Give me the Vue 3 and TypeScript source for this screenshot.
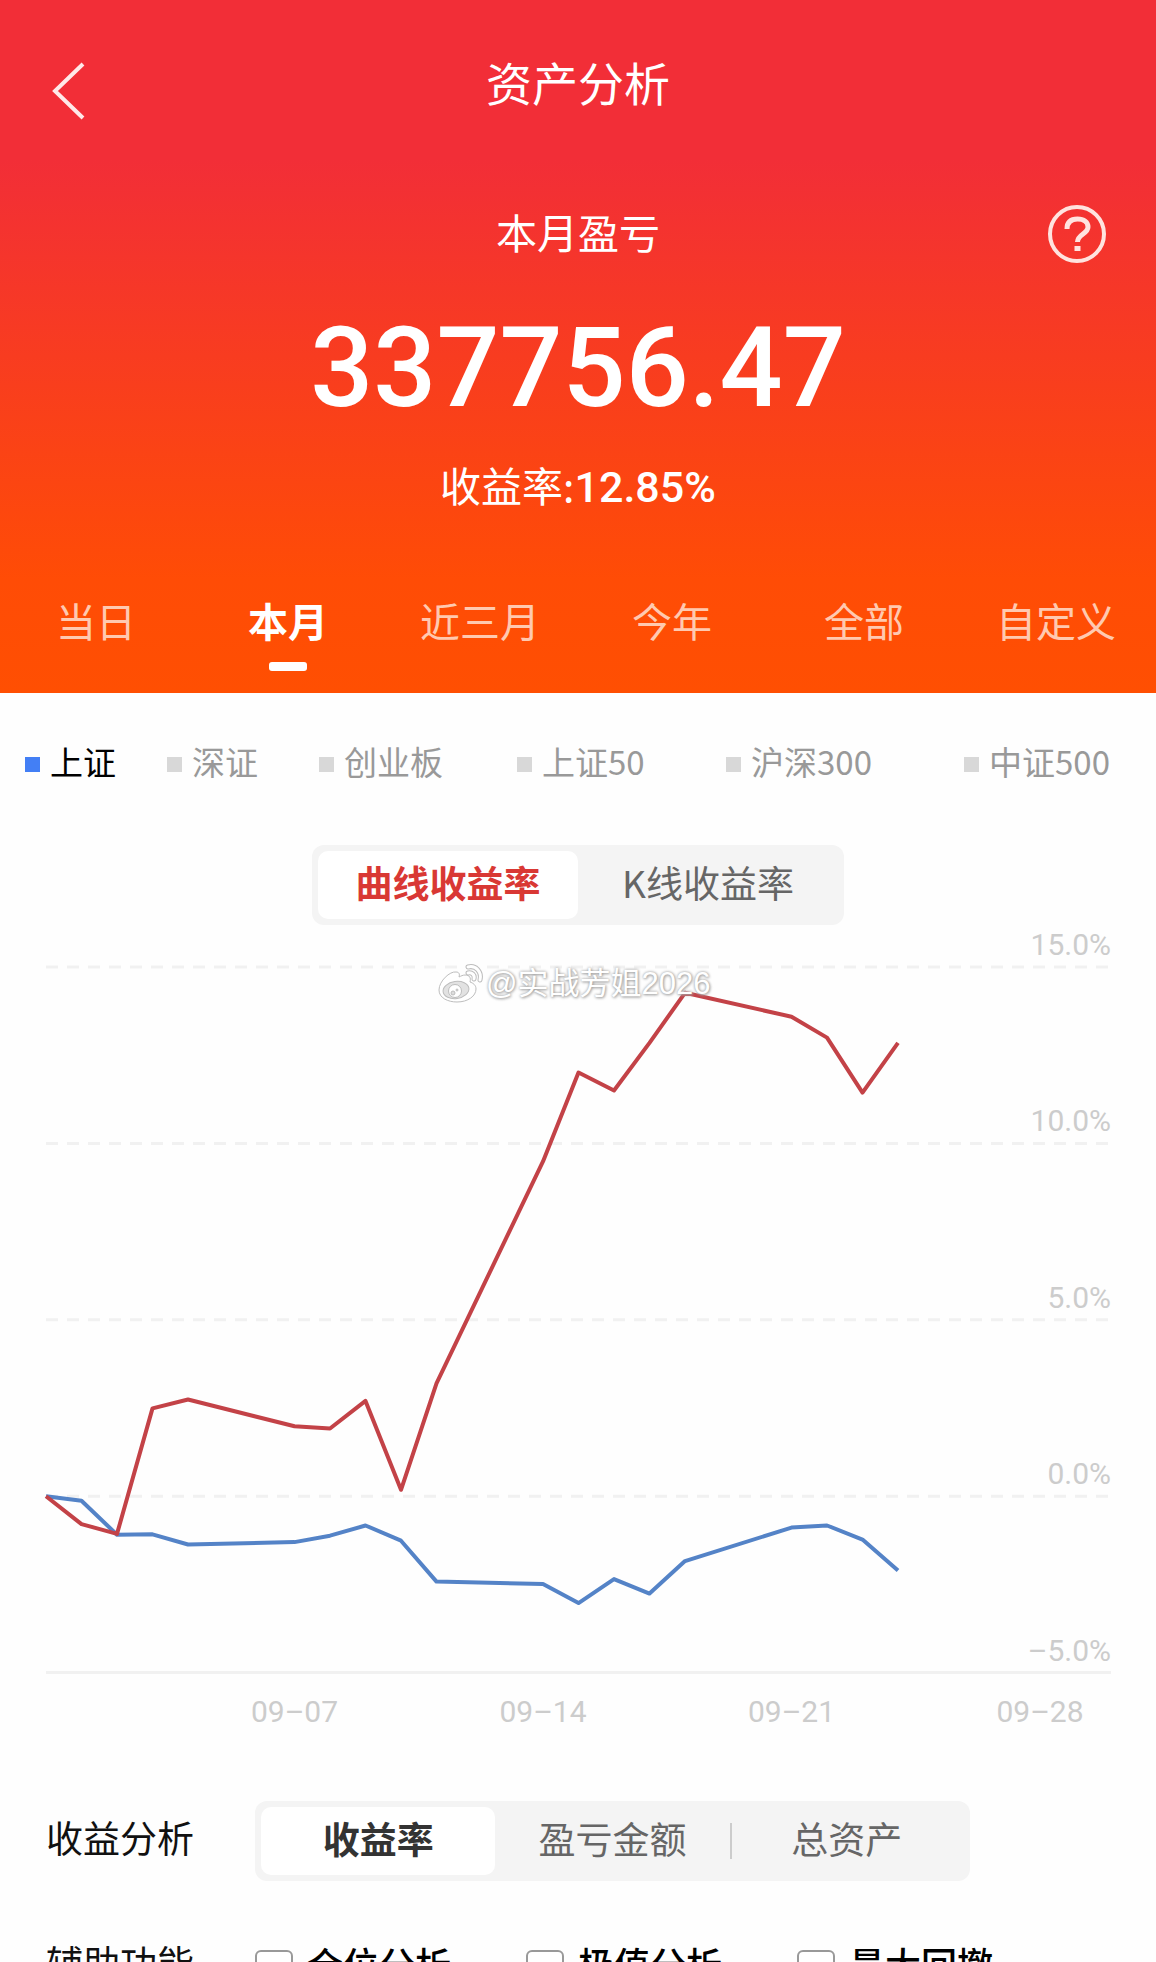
<script setup lang="ts">
import { ref } from 'vue'

const periods: string[] = ['当日', '本月', '近三月', '今年', '全部', '自定义']
const activePeriod = ref('本月')

const indexes: string[] = ['上证', '深证', '创业板', '上证50', '沪深300', '中证500']
const activeIndex = ref('上证')

const curveModes: string[] = ['曲线收益率', 'K线收益率']
const activeCurve = ref('曲线收益率')

const analyses: string[] = ['收益率', '盈亏金额', '总资产']
const activeAnalysis = ref('收益率')

const helpers: string[] = ['仓位分析', '极值分析', '最大回撤']

// Chart geometry, in viewBox units
const WIDTH = 1065
const TOP = 42
const STEP = 176.4
const DAYS = 30

const levels: number[] = [15, 10, 5, 0, -5]
const dates = [
  { day: 7, label: '09–07' },
  { day: 14, label: '09–14' },
  { day: 21, label: '09–21' },
  { day: 28, label: '09–28' },
]

// Trading days of the month; weekends are skipped
const days: number[] = [0, 1, 2, 3, 4, 7, 8, 9, 10, 11, 14, 15, 16, 17, 18, 21, 22, 23, 24]
const mine: number[] = [0, -0.79, -1.07, 2.49, 2.74, 1.98, 1.92, 2.7, 0.18, 3.2, 9.49, 12.01, 11.5, 12.85, 14.27, 13.59, 13.0, 11.44, 12.85]
const market: number[] = [0, -0.13, -1.09, -1.08, -1.37, -1.3, -1.12, -0.83, -1.26, -2.42, -2.49, -3.03, -2.35, -2.76, -1.84, -0.89, -0.83, -1.23, -2.11]

const xOf = (day: number): number => (day / DAYS) * WIDTH
const yOf = (value: number): number => TOP + ((15 - value) / 5) * STEP
const pointsOf = (values: number[]): string =>
  values.map((v, i) => `${xOf(days[i]).toFixed(1)},${yOf(v).toFixed(1)}`).join(' ')
const percent = (v: number): string => `${v < 0 ? '–' : ''}${Math.abs(v).toFixed(1)}%`
</script>

<template>
  <div class="page">
    <header class="hero">
      <nav class="nav">
        <button class="back" type="button" aria-label="返回">
          <svg width="48" height="72" viewBox="0 0 48 72" fill="none">
            <path d="M39 16 L11 43 L39 70" stroke="#ffe9e8" stroke-width="4" />
          </svg>
        </button>
        <h1 class="title">资产分析</h1>
      </nav>

      <div class="caption-row">
        <span class="caption">本月盈亏</span>
        <button class="help" type="button" aria-label="说明">
          <svg width="60" height="60" viewBox="0 0 60 60" fill="none" stroke="#ffe3df">
            <circle cx="30" cy="31" r="27" stroke-width="4" />
            <path d="M20 26 C20 19 24 16 30.500 16 C37 16 41 19 41 24 C41 31 30.500 31 30.500 39" stroke-width="5" />
            <rect x="27.500" y="43" width="6" height="5" fill="#ffe3df" stroke="none" />
          </svg>
        </button>
      </div>
      <div class="amount">337756.47</div>
      <div class="rate">收益率:<b>12.85%</b></div>

      <div class="periods">
        <button
          v-for="p in periods"
          :key="p"
          type="button"
          class="period"
          :class="{ on: p === activePeriod }"
          @click="activePeriod = p"
        >{{ p }}</button>
      </div>
    </header>

    <div class="legend">
      <button
        v-for="name in indexes"
        :key="name"
        type="button"
        class="index"
        :class="{ on: name === activeIndex }"
        @click="activeIndex = name"
      ><i class="dot"></i>{{ name }}</button>
    </div>

    <div class="segment modes">
      <button
        v-for="m in curveModes"
        :key="m"
        type="button"
        class="option"
        :class="{ on: m === activeCurve }"
        @click="activeCurve = m"
      >{{ m }}</button>
    </div>

    <div class="chart">
      <svg class="plot" viewBox="0 0 1065 810">
        <line
          v-for="v in levels"
          :key="v"
          class="grid"
          :class="{ base: v === -5 }"
          x1="0"
          :x2="WIDTH"
          :y1="yOf(v)"
          :y2="yOf(v)"
        />
        <text v-for="v in levels" :key="'t' + v" class="tick" text-anchor="end" :x="WIDTH" :y="yOf(v) - 12">{{ percent(v) }}</text>
        <text v-for="d in dates" :key="d.day" class="tick" text-anchor="middle" :x="xOf(d.day)" y="797">{{ d.label }}</text>
        <polyline class="line market" :points="pointsOf(market)" />
        <polyline class="line mine" :points="pointsOf(mine)" />
      </svg>
      <div class="watermark">
        <svg width="48" height="42" viewBox="0 0 48 42">
          <g fill="#fff" stroke="#bdbdbd" stroke-width="1">
            <path d="M20 9 C14 8 3 18 3 27 C3 35 12 39 21 39 C32 39 40 33 40 26 C40 22 37 20 34 19 C35 15 34 12 29 12 C27 12 25 13 23 14 C24 11 23 9 20 9 Z" />
            <ellipse cx="20" cy="27" rx="13" ry="8.500" fill="#e2e2e2" transform="rotate(-8 20 27)" />
            <circle cx="19" cy="28" r="6.500" />
            <circle cx="17" cy="30" r="2" fill="#ddd" />
            <circle cx="21" cy="27" r="1" fill="#ddd" />
          </g>
          <g fill="none" stroke-linecap="round">
            <path d="M32 4 C40 2 46 9 44 17 M32 10 C36 9 39 12 38 16" stroke="#bdbdbd" stroke-width="5" />
            <path d="M32 4 C40 2 46 9 44 17 M32 10 C36 9 39 12 38 16" stroke="#fff" stroke-width="3" />
          </g>
        </svg>
        <span>@实战芳姐2026</span>
      </div>
    </div>

    <section class="row">
      <h2 class="row-name">收益分析</h2>
      <div class="segment analysis">
        <button
          v-for="a in analyses"
          :key="a"
          type="button"
          class="option"
          :class="{ on: a === activeAnalysis }"
          @click="activeAnalysis = a"
        >{{ a }}</button>
      </div>
    </section>

    <section class="row helpers">
      <h2 class="row-name">辅助功能</h2>
      <label v-for="h in helpers" :key="h" class="helper">
        <input type="checkbox" class="box" />{{ h }}
      </label>
    </section>
  </div>
</template>

<style>
body {
  margin: 0;
  background: #fefefe;
}
</style>

<style scoped>
.page {
  height: 100vh;
  overflow: hidden;
  background: #fefefe;
  color: #111;
  font-family: "Noto Sans CJK SC", sans-serif;
}

button {
  margin: 0;
  padding: 0;
  border: 0;
  background: none;
  color: inherit;
  font: inherit;
  cursor: pointer;
}

svg {
  display: block;
}

.hero {
  padding-bottom: 22px;
  background: linear-gradient(#f22e37 0, #f22e37 160px, #ff4c06 580px, #ff4f02 100%);
  color: #fff;
  text-align: center;
}

.nav,
.caption-row {
  display: grid;
  grid-template-columns: 1fr auto 1fr;
  align-items: center;
}

.nav {
  height: 168px;
}

.back {
  justify-self: start;
  margin-left: 44px;
}

.title {
  margin: 0;
  padding-bottom: 6px;
  font-size: 46px;
  font-weight: 400;
  line-height: 64px;
}

.caption-row {
  margin-top: 31px;
  height: 64px;
}

.caption {
  grid-column: 2;
  font-size: 41px;
  line-height: 64px;
}

.help {
  justify-self: end;
  margin-right: 49px;
  padding-top: 4px;
}

.amount {
  margin-top: 49px;
  font-family: Roboto, sans-serif;
  font-size: 111px;
  font-weight: 500;
  line-height: 112px;
}

.rate {
  margin-top: 28px;
  font-size: 41px;
  line-height: 64px;
}

.rate b {
  font-family: Roboto, sans-serif;
  font-size: 43px;
  font-weight: 500;
}

.periods {
  display: grid;
  grid-template-columns: repeat(6, 1fr);
  margin-top: 69px;
  padding-right: 4px;
}

.period {
  display: flex;
  flex-direction: column;
  align-items: center;
  color: #ffc9b0;
  font-size: 40px;
  line-height: 64px;
}

.period::after {
  content: "";
  width: 38px;
  height: 9px;
  margin-top: 10px;
  border-radius: 3px;
}

.period.on {
  color: #fff;
  font-weight: 700;
}

.period.on::after {
  background: #fff;
}

.legend {
  display: grid;
  grid-template-columns: 142fr 152fr 198fr 209fr 238fr 192fr;
  padding: 44px 0 60px 25px;
}

.index {
  display: flex;
  align-items: center;
  gap: 10px;
  color: #999;
  font-size: 33px;
  line-height: 48px;
  white-space: nowrap;
}

.dot {
  width: 15px;
  height: 15px;
  margin-top: 6px;
  background: #d8d8d8;
}

.index.on {
  color: #000;
}

.index.on .dot {
  background: #437ff5;
}

.segment {
  display: grid;
  box-sizing: border-box;
  padding: 6px;
  border-radius: 12px;
  background: #f4f4f4;
}

.option {
  position: relative;
  padding-bottom: 6px;
  border-radius: 10px;
  color: #666;
  font-size: 37px;
  line-height: 62px;
}

.modes {
  grid-template-columns: 1fr 1fr;
  width: 46%;
  margin: 0 auto;
}

.option.on {
  background: #fff;
  color: #333;
  font-weight: 700;
}

.modes .option.on {
  color: #d93834;
}

.chart {
  position: relative;
  margin: 0 45px 0 46px;
}

.plot {
  width: 100%;
  height: auto;
  overflow: visible;
}

.grid {
  stroke: #f1f1f1;
  stroke-width: 3;
  stroke-dasharray: 12 9;
}

.grid.base {
  stroke-dasharray: none;
}

.tick {
  fill: #ccc;
  font-family: Roboto, sans-serif;
  font-size: 30px;
}

.line {
  fill: none;
  stroke-width: 4;
  stroke-linejoin: round;
}

.mine {
  stroke: #c34247;
}

.market {
  stroke: #5483c7;
}

.watermark {
  position: absolute;
  top: 38px;
  left: calc(37% - 4px);
  display: flex;
  align-items: center;
  gap: 2px;
  color: #fff;
  font-family: "Liberation Sans", "Noto Sans CJK SC", sans-serif;
  font-size: 31px;
  line-height: 42px;
  text-shadow: 0 0 3px #999, 1px 1px 3px #aaa;
  white-space: nowrap;
}

.row {
  display: flex;
  align-items: center;
  margin: 66px 46px 0;
}

.row-name {
  width: 209px;
  margin: 0;
  padding-bottom: 8px;
  font-size: 37px;
  font-weight: 400;
  line-height: 56px;
}

.analysis {
  grid-template-columns: repeat(3, 1fr);
  width: 715px;
}

.analysis .option + .option + .option::before {
  content: "";
  position: absolute;
  top: 16px;
  left: 0;
  width: 2px;
  height: 36px;
  background: #ccc;
}

.helpers {
  margin-top: 53px;
}

.helper {
  display: flex;
  align-items: center;
  gap: 14px;
  width: 271px;
  padding-bottom: 6px;
  color: #000;
  font-size: 36px;
  font-weight: 500;
  line-height: 56px;
  white-space: nowrap;
}

.box {
  appearance: none;
  box-sizing: border-box;
  width: 38px;
  height: 38px;
  margin: 12px 0 0;
  border: 2px solid #999;
  border-radius: 6px;
  background: #fff;
}
</style>
